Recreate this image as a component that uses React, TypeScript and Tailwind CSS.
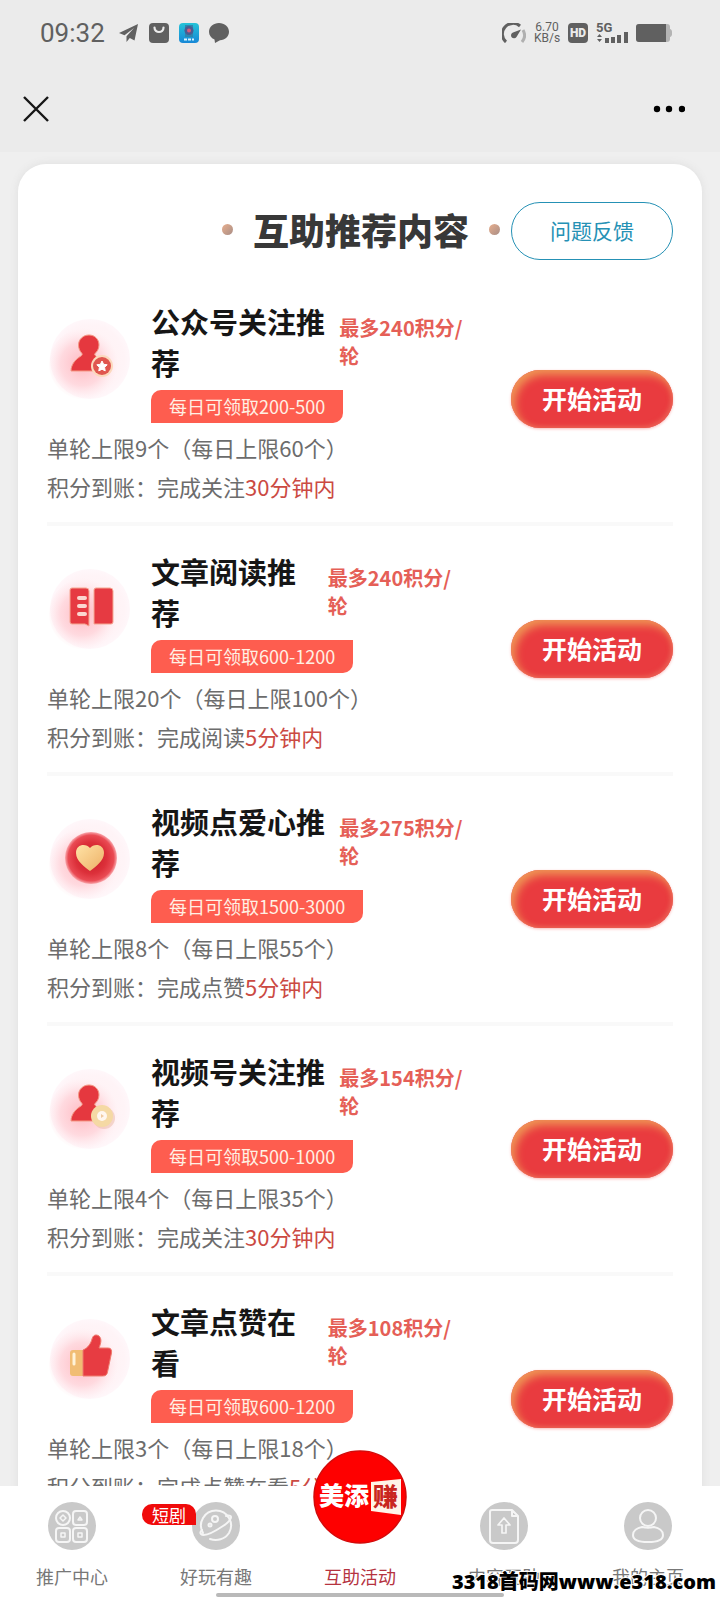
import { ReactNode } from "react";

type Task = {
  title: string;
  max: string;
  daily: string;
  limit: string;
  action: string;
  time: string;
  icon: ReactNode;
};

function IconDisc({ id, children }: { id: string; children: ReactNode }) {
  return (
    <svg viewBox="0 0 84 84" className="mt-4 size-[84px] shrink-0" aria-hidden="true">
      <defs>
        <radialGradient id={`${id}-disc`} cx="0.5" cy="0.5" r="0.5">
          <stop offset="0" stopColor="#fff1f3" />
          <stop offset="0.85" stopColor="#fff4f7" />
          <stop offset="1" stopColor="#fff7fa" />
        </radialGradient>
        <radialGradient id={`${id}-glow`} cx="0.46" cy="0.5" r="0.5">
          <stop offset="0" stopColor="#ff9aa5" stopOpacity="0.65" />
          <stop offset="0.6" stopColor="#ffb3bd" stopOpacity="0.4" />
          <stop offset="1" stopColor="#ffd9df" stopOpacity="0" />
        </radialGradient>
      </defs>
      <circle cx="43" cy="42" r="40" fill={`url(#${id}-disc)`} />
      <circle cx="38" cy="47" r="36" fill={`url(#${id}-glow)`} />
      {children}
    </svg>
  );
}

function PersonShape() {
  return (
    <path
      d="M42 18c6 0 10 4.500 10 10 0 4-2 7-4.500 9 1 3 4 4 7 6v11H24c0-7 5-12 10-15 1-.7 1.500-1.500 1-2.500-2-2-3.500-5-3.500-8.500 0-5.500 4.500-10 10.500-10z"
      fill="#e5383f"
      stroke="#f39a85"
      strokeWidth="1"
    />
  );
}

function FollowIcon() {
  return (
    <IconDisc id="follow">
      <PersonShape />
      <circle cx="55" cy="49" r="11" fill="#fbd9bd" />
      <circle cx="55" cy="49" r="9" fill="#e0564f" />
      <path
        d="m55 44 1.600 3.300 3.600.5-2.600 2.500.6 3.600-3.200-1.700-3.200 1.700.6-3.600-2.600-2.500 3.600-.5z"
        fill="#fff"
        stroke="#fff"
        strokeLinejoin="round"
      />
    </IconDisc>
  );
}

function ReadIcon() {
  return (
    <IconDisc id="read">
      <path
        d="M25 21h14q3 0 3 3v35l-4-2H25q-2 0-2-2V23q0-2 2-2zM49 21h14q3 0 3 3v31q0 2-2 2H47V23q0-2 2-2z"
        fill="#e63a42"
        stroke="#f5a893"
        strokeWidth="1"
      />
      <path
        d="M32 31h6M32 39h6M32 47h6"
        stroke="#fbd7d0"
        strokeWidth="4"
        strokeLinecap="round"
      />
    </IconDisc>
  );
}

function HeartIcon() {
  return (
    <IconDisc id="heart">
      <defs>
        <radialGradient id="heart-ball">
          <stop offset="0" stopColor="#c81a25" />
          <stop offset="0.6" stopColor="#dc303a" />
          <stop offset="0.88" stopColor="#ea4b54" />
          <stop offset="1" stopColor="#f9a9ae" />
        </radialGradient>
        <linearGradient id="heart-gold" x1="0" y1="0" x2="1" y2="1">
          <stop offset="0" stopColor="#ffe3a6" />
          <stop offset="1" stopColor="#edb066" />
        </linearGradient>
      </defs>
      <circle cx="44" cy="41" r="26" fill="url(#heart-ball)" />
      <path
        d="M43 31c4-5 14-4 14 5 0 8-9 14-14 18-5-4-14-10-14-18 0-9 10-10 14-5z"
        fill="url(#heart-gold)"
      />
    </IconDisc>
  );
}

function ChannelIcon() {
  return (
    <IconDisc id="channel">
      <PersonShape />
      <circle cx="57" cy="51" r="11" fill="#e9b9a6" opacity="0.5" />
      <circle cx="55" cy="49" r="11" fill="#f5d9a4" />
      <circle cx="55" cy="49" r="5" fill="#fff6ee" />
      <path d="m54 47 3 2-3 2z" fill="#f0c9a0" />
    </IconDisc>
  );
}

function LikeIcon() {
  return (
    <IconDisc id="like">
      <rect x="23" y="33" width="15" height="26" rx="3" fill="#f1bd74" />
      <path d="M27 37v10" stroke="#fff3d8" strokeWidth="3" strokeLinecap="round" />
      <path
        d="M36 33c5-2 8-7 9-11 1-4 4-5 7-3 3 3 2 7 0 12h9c3 0 4 2 3.500 5l-4 19c-.5 3-2 4-5 4H36z"
        fill="#e73c42"
        stroke="#ee7c6e"
        strokeWidth="1"
      />
    </IconDisc>
  );
}

const tasks: Task[] = [
  {
    title: "公众号关注推荐",
    max: "最多240积分/轮",
    daily: "每日可领取200-500",
    limit: "单轮上限9个（每日上限60个）",
    action: "完成关注",
    time: "30分钟内",
    icon: <FollowIcon />,
  },
  {
    title: "文章阅读推荐",
    max: "最多240积分/轮",
    daily: "每日可领取600-1200",
    limit: "单轮上限20个（每日上限100个）",
    action: "完成阅读",
    time: "5分钟内",
    icon: <ReadIcon />,
  },
  {
    title: "视频点爱心推荐",
    max: "最多275积分/轮",
    daily: "每日可领取1500-3000",
    limit: "单轮上限8个（每日上限55个）",
    action: "完成点赞",
    time: "5分钟内",
    icon: <HeartIcon />,
  },
  {
    title: "视频号关注推荐",
    max: "最多154积分/轮",
    daily: "每日可领取500-1000",
    limit: "单轮上限4个（每日上限35个）",
    action: "完成关注",
    time: "30分钟内",
    icon: <ChannelIcon />,
  },
  {
    title: "文章点赞在看",
    max: "最多108积分/轮",
    daily: "每日可领取600-1200",
    limit: "单轮上限3个（每日上限18个）",
    action: "完成点赞在看",
    time: "5分钟内",
    icon: <LikeIcon />,
  },
];

function StatusBar() {
  return (
    <div className="flex h-[66px] items-center justify-between pr-12 pl-10 text-[#606060]">
      <div className="flex items-center gap-[10px]">
        <span className="mr-1 font-[Roboto] text-[26px] leading-8">09:32</span>
        <svg viewBox="0 0 20 20" className="size-5" fill="currentColor">
          <path d="M19 1 0 10l5.500 2.200L15 5l-7.500 8.300V19l3.300-4 4.700 2.500z" />
        </svg>
        <svg viewBox="0 0 20 20" className="size-5">
          <rect width="20" height="20" rx="4" fill="currentColor" />
          <path d="M5.500 4.500c0 6 9 6 9 0" stroke="#ebebeb" strokeWidth="2.200" fill="none" strokeLinecap="round" />
        </svg>
        <svg viewBox="0 0 20 20" className="size-5">
          <defs>
            <linearGradient id="app-blue" x1="0" y1="0" x2="0" y2="1">
              <stop offset="0" stopColor="#25c3d8" />
              <stop offset="1" stopColor="#1787d6" />
            </linearGradient>
          </defs>
          <rect width="20" height="20" rx="4" fill="url(#app-blue)" />
          <path d="M6 2h8v12H6z" fill="#2d86ae" />
          <circle cx="10" cy="7.500" r="4.500" fill="#4a5d92" />
          <circle cx="10" cy="7.500" r="2" fill="#d95a78" />
          <path d="M5 16.500h10" stroke="#d8f2ff" strokeWidth="2" strokeDasharray="3 1" />
        </svg>
        <svg viewBox="0 0 20 20" className="size-5" fill="currentColor">
          <path d="M10 0c5.500 0 10 3.700 10 8.700 0 4.800-4 8.300-9 8.600L6 20l-.5-3.500C2 15 0 12 0 8.700 0 3.700 4.500 0 10 0z" />
        </svg>
      </div>
      <div className="flex items-center gap-2">
        <svg viewBox="0 0 24 20" className="h-5 w-6" fill="none" strokeWidth="3">
          <path d="M4 19A10.500 10.500 0 0 1 18 3" stroke="currentColor" />
          <path d="M21 7a10.500 10.500 0 0 1-1 12" stroke="#b0b0b0" />
          <path d="M19 6.500 14.500 14a3 3 0 1 1-3.500-4.500z" fill="currentColor" />
        </svg>
        <span className="w-[26px] text-center font-[Roboto] text-[12px] leading-[11px]">
          6.70
          <br />
          KB/s
        </span>
        <span className="grid size-5 place-content-center rounded bg-[#606060] font-[Roboto] text-[12px] leading-none font-black text-[#ebebeb]">
          HD
        </span>
        <svg viewBox="0 0 32 20" className="h-5 w-8 overflow-visible" fill="currentColor">
          <text x="0" y="9" fontFamily="Roboto" fontSize="13" fontWeight="700">
            5G
          </text>
          <path d="M1 14 3.500 11 6 14zM1 16h5l-2.500 3z" />
          <path d="M9 15h4v5H9zM15 14h4v6h-4zM21 12h4v8h-4zM28 9h4v11h-4z" />
        </svg>
        <svg viewBox="0 0 36 18" className="h-[18px] w-9">
          <rect width="34" height="18" rx="3" fill="#b4b4b4" />
          <path d="M34 5c3 1 3 7 0 8z" fill="#b4b4b4" />
          <path d="M3 0h27v18H3q-3 0-3-3V3q0-3 3-3z" fill="currentColor" />
        </svg>
      </div>
    </div>
  );
}

function TopBar() {
  return (
    <div className="flex h-[86px] items-center justify-between px-[23px]">
      <button aria-label="关闭">
        <svg viewBox="0 0 26 26" className="size-[26px]">
          <path d="m1 1 24 24M25 1 1 25" stroke="#161616" strokeWidth="2.400" />
        </svg>
      </button>
      <button aria-label="更多" className="mr-3">
        <svg viewBox="0 0 32 8" className="h-2 w-8">
          <circle cx="4" cy="4" r="3.200" />
          <circle cx="16" cy="4" r="3.200" />
          <circle cx="29" cy="4" r="3.200" />
        </svg>
      </button>
    </div>
  );
}

function Dot() {
  return (
    <span className="size-[11px] rounded-full bg-linear-to-br from-[#e8ae8d] to-[#a98e86]" />
  );
}

function TaskRow({ task }: { task: Task }) {
  return (
    <li className="flex items-center justify-between gap-[46px] border-b-4 border-[#f9f9f9]">
      <div className="min-w-0 flex-1 pt-[25px] pb-4">
        <div className="flex items-start gap-5">
          {task.icon}
          <div className="min-w-0 flex-1">
            <div className="flex items-center gap-[10px]">
              <h3 className="text-[29px] leading-[41px] font-bold text-[#161616]">
                {task.title}
              </h3>
              <p className="text-[20px] leading-7 font-bold text-[#e55f57]">
                {task.max}
              </p>
            </div>
            <p className="mt-[7px] w-fit rounded-tl-[10px] rounded-br-[10px] bg-[#fe5d4f] px-[18px] text-[18px] leading-[33px] whitespace-nowrap text-[#fff0e4]">
              {task.daily}
            </p>
          </div>
        </div>
        <p className="mt-[5px] text-[22px] leading-[39px] whitespace-nowrap text-[#6c6c6c]">
          {task.limit}
        </p>
        <p className="text-[22px] leading-[39px] whitespace-nowrap text-[#6c6c6c]">
          积分到账：{task.action}
          <span className="text-[#cb4a43]">{task.time}</span>
        </p>
      </div>
      <button className="h-[58px] w-[162px] shrink-0 rounded-full bg-[#e93b3f] text-[25px] font-bold text-white shadow-[inset_4px_5px_8px_#ef9555,inset_-2px_-2px_4px_#ea5a54,0_1px_3px_#f9b8b8]">
        开始活动
      </button>
    </li>
  );
}

function NavItem({ label, children }: { label: string; children: ReactNode }) {
  return (
    <a
      href="#"
      className="relative flex flex-1 flex-col items-center gap-3 pt-4 text-[18px] leading-7 text-[#777]"
    >
      {children}
      {label}
    </a>
  );
}

function NavIcon({ children }: { children: ReactNode }) {
  return (
    <svg
      viewBox="0 0 48 48"
      className="size-12"
      fill="none"
      stroke="#f5f5f5"
      strokeWidth="2"
      strokeLinejoin="round"
      strokeLinecap="round"
    >
      <circle cx="24" cy="24" r="24" fill="#c9c9c9" stroke="none" />
      {children}
    </svg>
  );
}

function BottomNav() {
  return (
    <nav className="relative flex h-[114px] shrink-0 bg-white">
      <NavItem label="推广中心">
        <NavIcon>
          <circle cx="15" cy="16" r="7" />
          <rect x="25" y="9" width="14" height="14" rx="3" />
          <rect x="8" y="26" width="14" height="14" rx="3" />
          <rect x="25" y="26" width="14" height="14" rx="3" />
          <path d="m15 13 3 3-3 3-3-3zM30 18l2-3 2 3zM13 31h4v4h-4zM30 31h4v4h-4z" strokeWidth="1.500" />
        </NavIcon>
      </NavItem>
      <NavItem label="好玩有趣">
        <NavIcon>
          <path d="M11 31A15 15 0 1 1 37 31 16 16 0 0 1 18 37" />
          <path d="M34 14c8-2 6 4-3 10S12 35 9 32c-1-1 0-3 1-4" />
          <circle cx="23" cy="17" r="3" />
          <circle cx="18" cy="23" r="1.500" />
        </NavIcon>
        <span className="absolute top-[18px] right-5 w-[54px] -translate-x-[72px] rounded-l-[10px] rounded-tr-[10px] bg-[#f00b0b] text-center text-[17px] leading-[21px] text-white">
          短剧
        </span>
      </NavItem>
      <a
        href="#"
        className="relative flex flex-1 flex-col items-center pt-[76px] text-[18px] leading-7 text-[#b5333f]"
      >
        <svg viewBox="0 0 94 94" className="absolute -top-9 size-[94px]" aria-hidden="true">
          <circle cx="47" cy="47" r="46" fill="#fe0000" stroke="#d40a0a" strokeWidth="1.500" />
          <text x="6" y="55" fontSize="25" fontWeight="900" fill="#fff" fontFamily="Noto Sans CJK SC">
            美添
          </text>
          <path d="m58 32 30-3v36l-30-4z" fill="#fff3e8" />
          <text x="60" y="56" fontSize="25" fontWeight="900" fill="#c92620" fontFamily="Noto Sans CJK SC">
            赚
          </text>
        </svg>
        互助活动
      </a>
      <NavItem label="内容互助">
        <NavIcon>
          <path d="M12 8h20l6 6v24q0 3-3 3H13q-3 0-3-3V10q0-2 2-2zM32 8v6h6" />
          <path d="m24 16-6 7h4v8h4v-8h4z" strokeWidth="1.700" />
        </NavIcon>
      </NavItem>
      <NavItem label="我的主页">
        <NavIcon>
          <circle cx="24" cy="16" r="8" />
          <path d="M18 25c-5 1-9 4-9 8 0 5 6 7 15 7s15-2 15-7c0-4-4-7-9-8-4 1-8 1-12 0z" />
        </NavIcon>
      </NavItem>
      <span className="absolute bottom-[3px] left-1/2 h-1 w-72 -translate-x-1/2 rounded-full bg-[#b9b9b9]" />
      <span className="absolute right-1 bottom-1 font-['Open_Sans','Noto_Sans_CJK_SC',sans-serif] text-[20px] leading-7 font-extrabold text-black [paint-order:stroke_fill] [-webkit-text-stroke:2px_white]">
        3318首码网www.e318.com
      </span>
    </nav>
  );
}

function App() {
  return (
    <div className="flex h-screen flex-col bg-[#efefef] font-['Noto_Sans_CJK_SC',sans-serif]">
      <header className="shrink-0 bg-[#ebebeb]">
        <StatusBar />
        <TopBar />
      </header>
      <main className="min-h-0 flex-1 overflow-y-auto px-[18px] pt-3 [scrollbar-width:none]">
        <section className="rounded-[28px] bg-white px-[29px] pt-[38px] pb-8 shadow-[0_0_8px_#dedede]">
          <div className="mb-4 flex items-center justify-end">
            <div className="flex items-center pb-1">
              <Dot />
              <h2 className="mx-5 text-[36px] leading-[50px] font-black whitespace-nowrap text-[#383838]">
                互助推荐内容
              </h2>
              <Dot />
            </div>
            <button className="ml-[11px] h-[58px] w-[162px] rounded-full border border-[#2591b5] text-[21px] text-[#2591b5]">
              问题反馈
            </button>
          </div>
          <ul>
            {tasks.map((task) => (
              <TaskRow key={task.title} task={task} />
            ))}
          </ul>
        </section>
      </main>
      <BottomNav />
    </div>
  );
}

export default App;
